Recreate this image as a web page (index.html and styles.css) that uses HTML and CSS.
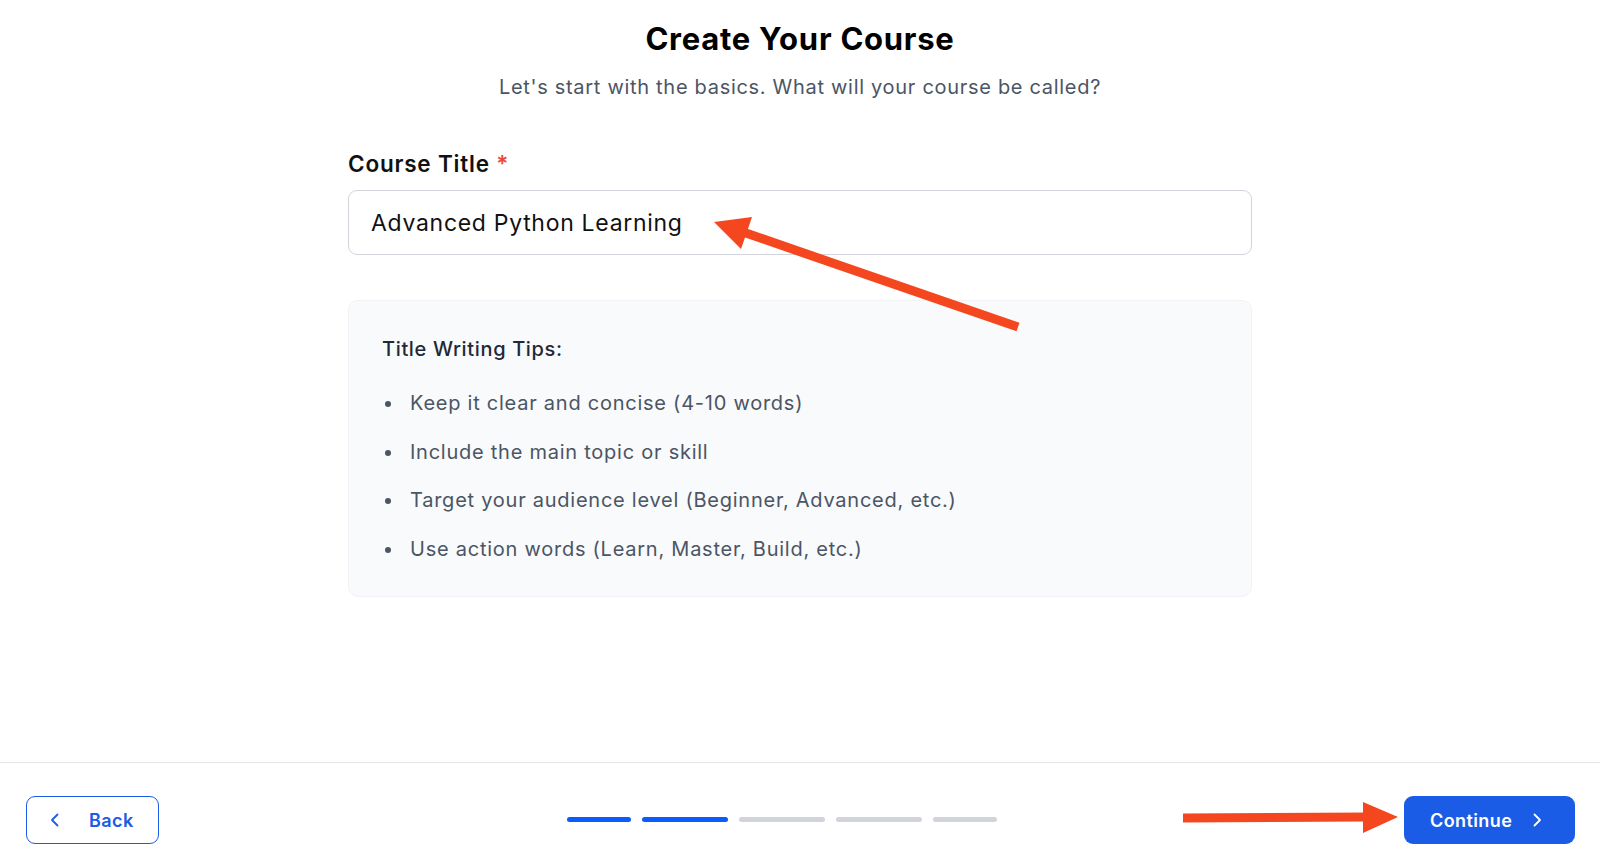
FILE: index.html
```html
<!DOCTYPE html>
<html lang="en">
<head>
    <meta charset="UTF-8">
    <meta name="viewport" content="width=device-width, initial-scale=1.0">
    <title>Create Your Course</title>
    <link rel="stylesheet" href="styles.css">
</head>
<body>
    <div class="page">
        <main class="content">
            <header class="intro">
                <h1>Create Your Course</h1>
                <p>Let's start with the basics. What will your course be called?</p>
            </header>

            <div class="field">
                <label for="courseTitle">Course Title <span class="required">*</span></label>
                <input class="title-input" id="courseTitle" type="text" value="Advanced Python Learning">
            </div>

            <section class="tips">
                <h3>Title Writing Tips:</h3>
                <ul>
                    <li>Keep it clear and concise (4-10 words)</li>
                    <li>Include the main topic or skill</li>
                    <li>Target your audience level (Beginner, Advanced, etc.)</li>
                    <li>Use action words (Learn, Master, Build, etc.)</li>
                </ul>
            </section>
        </main>

        <footer class="wizard-footer">
            <button class="button button-outline">
                <svg class="chevron" viewBox="0 0 10 16" width="10" height="16"><path d="M7.5 2.5 L2 8 L7.5 13.5" /></svg>
                <span>Back</span>
            </button>

            <div class="steps">
                <span class="step done first"></span>
                <span class="step done"></span>
                <span class="step"></span>
                <span class="step"></span>
                <span class="step last"></span>
            </div>

            <button class="button button-primary">
                <span>Continue</span>
                <svg class="chevron" viewBox="0 0 10 16" width="10" height="16"><path d="M2.5 2.5 L8 8 L2.5 13.5" /></svg>
            </button>
        </footer>

        <!-- annotation arrows drawn over the screenshot -->
        <svg class="annotations" viewBox="0 0 1600 859" width="1600" height="859">
            <line x1="1018" y1="327" x2="740" y2="231" />
            <polygon points="714,222 752,217 741,249" />
            <line x1="1183" y1="818" x2="1368" y2="817" />
            <polygon points="1398,817 1363,802 1363,833" />
        </svg>
    </div>
</body>
</html>
```

FILE: styles.css
```css
body {
    margin: 0;
    font-family: Inter, 'Noto Sans', sans-serif;
    background: #ffffff;
    color: #111827;
}
.page {
    position: relative;
    width: 1600px;
    height: 859px;
    display: flex;
    flex-direction: column;
    overflow: hidden;
}
.content {
    flex: 1;
    width: 904px;
    margin: 0 auto;
    padding-top: 19px;
    box-sizing: border-box;
}
.intro {
    text-align: center;
}
.intro h1 {
    margin: 0;
    font-size: 31px;
    line-height: 40px;
    font-weight: 700;
    letter-spacing: 0.75px;
    color: #000000;
}
.intro p {
    margin: 14px 0 0;
    font-size: 20px;
    line-height: 28px;
    letter-spacing: 0.7px;
    color: #4b5563;
}
.field {
    margin-top: 48px;
    display: flex;
    flex-direction: column;
}
.field label {
    font-size: 22.5px;
    line-height: 30px;
    font-weight: 600;
    letter-spacing: 0.8px;
    color: #111111;
}
.required {
    color: #ef4444;
}
.title-input {
    margin-top: 11px;
    height: 65px;
    box-sizing: border-box;
    border: 1px solid #d1d5db;
    border-radius: 9px;
    padding: 0 22px;
    font-family: inherit;
    font-size: 23px;
    letter-spacing: 0.7px;
    color: #111111;
    background: #ffffff;
    outline: none;
}
.tips {
    margin-top: 45px;
    height: 297px;
    box-sizing: border-box;
    padding: 34px 33px;
    background: #f8fafc;
    border: 1px solid #f1f3f6;
    border-radius: 10px;
}
.tips h3 {
    margin: 0;
    font-size: 20px;
    line-height: 28px;
    font-weight: 500;
    letter-spacing: 0.65px;
    color: #1f2937;
}
.tips ul {
    list-style: none;
    margin: 26px 0 0;
    padding: 0;
    display: flex;
    flex-direction: column;
    gap: 20.5px;
}
.tips li {
    position: relative;
    padding-left: 28px;
    font-size: 20px;
    line-height: 28px;
    letter-spacing: 0.75px;
    color: #4b5563;
}
.tips li::before {
    content: '';
    position: absolute;
    left: 3px;
    top: 12px;
    width: 6px;
    height: 6px;
    border-radius: 50%;
    background: #4b5563;
}
.wizard-footer {
    height: 97px;
    box-sizing: border-box;
    border-top: 1px solid #e5e7eb;
    padding: 33px 25px 0 26px;
    display: flex;
    justify-content: space-between;
    align-items: flex-start;
}
.button {
    height: 48px;
    box-sizing: border-box;
    display: flex;
    align-items: center;
    font-family: inherit;
    font-size: 18px;
    font-weight: 600;
    letter-spacing: 0.4px;
    border-radius: 9px;
    cursor: pointer;
}
.button .chevron {
    fill: none;
    stroke: currentColor;
    stroke-width: 1.8;
    stroke-linecap: round;
    stroke-linejoin: round;
}
.button-outline {
    width: 133px;
    padding: 0 0 0 23px;
    gap: 29px;
    background: #ffffff;
    color: #1a5ce6;
    border: 1.5px solid #1a5ce6;
}
.button-primary {
    width: 171px;
    padding: 0 0 0 26px;
    gap: 20px;
    background: #1a5ce6;
    color: #ffffff;
    border: none;
}
.steps {
    margin-top: 21px;
    display: flex;
    gap: 11px;
}
.step {
    width: 86px;
    height: 5px;
    border-radius: 3px;
    background: #d1d5db;
}
.step.first,
.step.last {
    width: 64px;
}
.step.done {
    background: #0b5cff;
}
.annotations {
    position: absolute;
    top: 0;
    left: 0;
    pointer-events: none;
}
.annotations line {
    stroke: #f4471f;
    stroke-width: 9;
}
.annotations polygon {
    fill: #f4471f;
}
```
